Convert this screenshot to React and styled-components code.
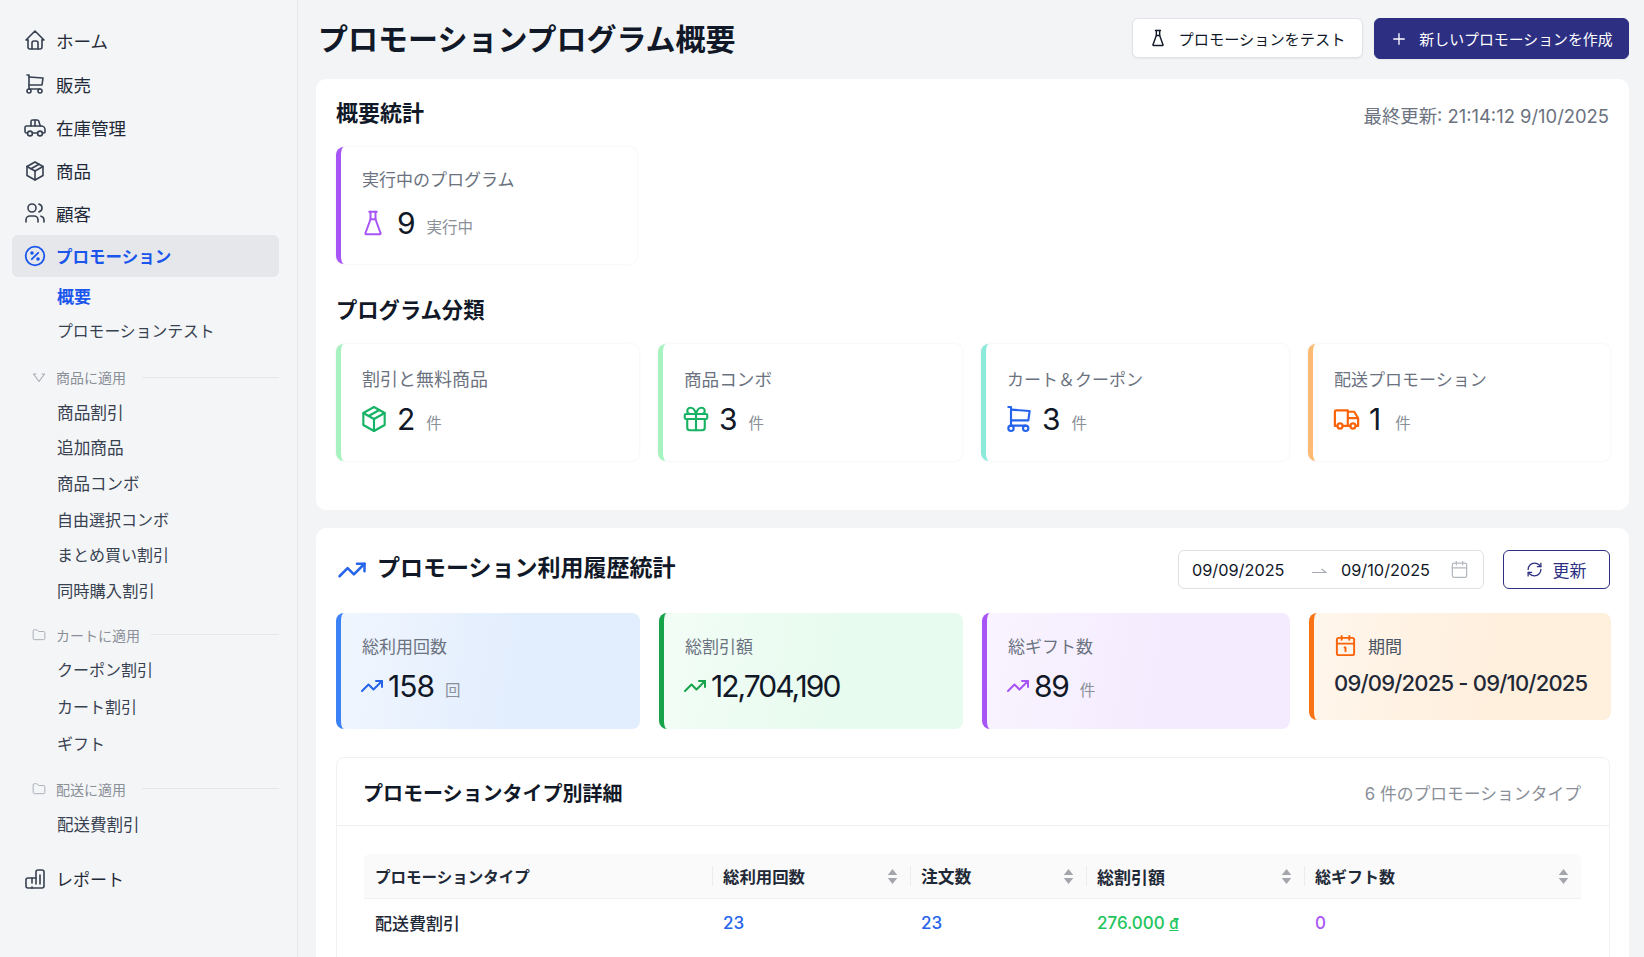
import React from "react";
import styled, { createGlobalStyle } from "styled-components";
import { Folder, Plus, TrendingUp, RefreshCw, Calendar, Calendar1 } from "lucide-react";
import { TbHome, TbShoppingCart, TbPackage, TbUsers, TbFlask, TbGift, TbTruck } from "react-icons/tb";

const Global = createGlobalStyle`
  html, body { margin: 0; padding: 0; height: 100%; overflow: hidden; background: #f3f4f6; }
  * { box-sizing: border-box; }
  body { font-family: Inter, "Noto Sans CJK JP", sans-serif; color: #111827; -webkit-font-smoothing: antialiased; }
`;

const BLUE = "#1a56eb";
const Page = styled.div`display: flex; width: 1644px; height: 957px; overflow: hidden; background: #f3f4f6;`;
const Sidebar = styled.aside`width: 298px; flex: none; padding: 19px 18px 0 12px; border-right: 1px solid #e6e8ec; background: #f4f5f7;`;
const NavItem = styled.div`
  display: flex; align-items: center; gap: 9px; height: ${p => p.$h}px; padding-left: 11px; margin-top: ${p => p.$mt || 0}px;
  font-size: ${p => p.$fs || 17.5}px; font-weight: ${p => p.$active ? 600 : 400}; color: ${p => p.$active ? BLUE : "#1f2937"};
  border-radius: 6px; background: ${p => p.$active ? "#e5e7eb" : "transparent"};
  svg { flex: none; width: 24px; height: 24px; color: ${p => p.$active ? BLUE : "#374151"}; stroke-width: 1.6; }
`;
const SubItem = styled.div`
  display: flex; align-items: center; height: ${p => p.$h}px; padding-left: 45px; margin-top: ${p => p.$mt || 0}px;
  font-size: ${p => p.$fs || 16}px; font-weight: ${p => p.$active ? 600 : 400}; color: ${p => p.$active ? BLUE : "#374151"};
`;
const GroupLabel = styled.div`
  display: flex; align-items: center; height: 26px; margin-top: ${p => p.$mt}px; padding-left: 20px;
  font-size: 14px; color: #8a8f98;
  svg { flex: none; width: 14px; height: 14px; color: #a6abb3; margin-right: 10px; stroke-width: 1.6; }
  &::after { content: ""; flex: 1; height: 1px; background: #e4e6ea; margin-left: ${p => p.$lineGap}px; }
`;

const Main = styled.main`flex: 1; min-width: 0; padding: 0 15px 0 18px; display: flex; flex-direction: column;`;
const TopBar = styled.header`display: flex; align-items: center; justify-content: space-between; height: 79px; padding-bottom: 2px; flex: none;`;
const PageTitle = styled.h1`margin: 0 0 0 2px; font-size: 30px; font-weight: 700; color: #111827; position: relative; top: -2px;`;
const Actions = styled.div`display: flex; gap: 11px;`;
const Button = styled.button`
  display: flex; align-items: center; justify-content: center; gap: ${p => p.$gap}px; height: ${p => p.$high ? 41 : 40}px; width: ${p => p.$w}px;
  border-radius: 6px; font: inherit; font-size: ${p => p.$primary ? 14.9 : 15.2}px; padding: 0 ${p => p.$primary ? 0 : 2}px 0 0;
  color: ${p => p.$primary ? "#fff" : "#111827"}; background: ${p => p.$primary ? "#2d2f82" : "#fff"};
  border: 1px solid ${p => p.$primary ? "#2d2f82" : "#e0e2e6"};
  box-shadow: 0 1px 2px rgba(0,0,0,.06);
  svg { flex: none; }
`;
const Panel = styled.section`
  background: #fff; border-radius: 10px; flex: none; height: ${p => p.$h}px; padding: ${p => p.$pt}px 19px 0 20px; margin-bottom: 18px;
`;
const PanelRow = styled.div`display: flex; align-items: center; justify-content: space-between; height: 28px;`;
const SectionTitle = styled.h2`margin: 0; font-size: 22px; font-weight: 600; color: #111827;`;
const Updated = styled.span`font-size: 18.4px; color: #6b7280; position: relative; top: 4px; margin-right: 1px;`;
const CardGrid = styled.div`display: grid; grid-template-columns: ${p => p.$cols}; column-gap: 19px; margin-top: ${p => p.$mt}px;`;
const StatCard = styled.div`
  height: 117px; padding: ${p => p.$pt}px 0 0 21px; background: #fff; border-radius: 8px; border-left: 5px solid ${p => p.$accent};
  box-shadow: 0 0 3px rgba(0,0,0,.07);
`;
const Label = styled.div`font-size: ${p => p.$fs || 17}px; line-height: 24px; color: #6b7280; white-space: nowrap;`;
const ValueRow = styled.div`display: flex; align-items: center; height: 36px; margin-top: ${p => p.$mt}px;`;
const IconBox = styled.span`display: flex; align-items: center; justify-content: center; width: ${p => p.$w}px; margin-right: ${p => p.$gap}px; color: ${p => p.$c}; svg { flex: none; }`;
const Number = styled.span`font-size: 30px; line-height: 36px; color: #111827; letter-spacing: ${p => p.$ls || 0}px;`;
const Unit = styled.span`font-size: 15.5px; color: #8a8f98; margin-left: ${p => p.$ml || 11}px; position: relative; top: 3px;`;
const SubSectionTitle = styled(SectionTitle)`margin-top: 32px; line-height: 28px; font-size: 21.3px;`;

const UsageHead = styled.div`display: flex; align-items: center; height: 39px;`;
const UsageTitle = styled.h2`margin: 0 0 0 10px; flex: 1; font-size: 23px; font-weight: 600; color: #111827; position: relative; top: -4px;`;
const TitleIcon = styled.span`display: flex; color: #2563eb; margin-left: 1px;`;
const RangePicker = styled.div`
  display: flex; align-items: center; width: 306px; height: 39px; border: 1px solid #dfe1e5; border-radius: 6px; padding-left: 13px; font-size: 16.3px; color: #111827; background: #fff;
`;
const RangeText = styled.span`flex: none; width: ${p => p.$w}px; white-space: nowrap;`;
const RangeArrow = styled.span`display: flex; flex: none; margin: 2px 14px 0 28px; color: #a6abb3;`;
const RangeIcon = styled.span`display: flex; margin-left: 19px; color: #b4b8bf;`;
const RefreshButton = styled.button`
  display: flex; align-items: center; justify-content: center; gap: 10px; width: 107px; height: 39px; margin-left: 19px; font: inherit; font-size: 17px;
  color: #2d2f82; background: #fff; border: 1px solid #2d2f82; border-radius: 6px; padding: 0 1px 1px 0;
`;
const MetricGrid = styled.div`display: grid; grid-template-columns: 304px 304px 308px 302px; column-gap: 19px; align-items: start; margin-top: 24px;`;
const Metric = styled.div`
  height: ${p => p.$h}px; padding: ${p => p.$pt}px 0 0 ${p => p.$pl}px; border-radius: 8px; border-left: 5px solid ${p => p.$accent};
  background: linear-gradient(100deg, ${p => p.$from}, ${p => p.$to} 60%);
`;
const MetricValueRow = styled(ValueRow)`margin-top: 9px;`;
const PeriodLabel = styled.div`display: flex; align-items: center; gap: 11px; height: 22px; font-size: 17px; color: #4b5563; svg { color: #f9640a; flex: none; }`;
const PeriodValue = styled.div`margin-top: 13px; font-size: 22px; line-height: 28px; letter-spacing: -0.8px; font-weight: 500; color: #1f2937; white-space: nowrap;`;

const TableCard = styled.div`margin-top: 28px; height: 300px; border: 1px solid #f0f1f3; border-radius: 8px;`;
const TableCardHead = styled.div`display: flex; align-items: center; justify-content: space-between; height: 68px; padding: 2px 28px 0 26px; border-bottom: 1px solid #eeeff2;`;
const TableTitle = styled.h3`margin: 0; font-size: 20px; font-weight: 600; color: #111827;`;
const TableCount = styled.span`font-size: 16.8px; color: #8a8f98;`;
const TableWrap = styled.div`margin: 28px 28px 0 27px;`;
const Row = styled.div`display: grid; grid-template-columns: 348px 198px 176px 218px 277px; align-items: center;`;
const HeadRow = styled(Row)`height: 45px; background: #fafafa; border-bottom: 1px solid #f0f0f0; border-radius: 6px 6px 0 0;`;
const HeadCell = styled.div`
  position: relative; display: flex; align-items: center; justify-content: space-between; height: 100%; padding: 0 12px 0 11px; font-size: ${p => p.$fs}px; font-weight: 600; color: #1f2937;
  &:not(:first-child)::before { content: ""; position: absolute; left: 0; top: 12px; height: 20px; width: 1px; background: #ececec; }
`;
const SortIcon = styled.svg`flex: none; width: 11px; height: 17px; fill: #a3a6ab;`;
const BodyRow = styled(Row)`height: 47px;`;
const Cell = styled.div`padding-left: 11px; font-size: 17px; font-weight: 500; color: ${p => p.$c || "#1f2937"};`;
const Dong = styled.span`text-decoration: underline; font-size: 15px;`;

const WarehouseIcon = () => (
  <svg viewBox="0 0 24 24" fill="none" stroke="currentColor" strokeLinecap="round" strokeLinejoin="round">
    <path d="M4.500 17H3.600A1.600 1.600 0 0 1 2 15.400v-3.800c0-.9.7-1.600 1.600-1.600H8V5.600C8 4.700 8.700 4 9.600 4h4.600c.7 0 1.300.4 1.500 1l1.600 5h1.100c1.700 0 3.600 1.600 3.600 3.600V16a1 1 0 0 1-1 1h-.8" />
    <path d="M8 10h9.300" /><path d="M12 10V4" /><path d="M9.500 17h5" /><circle cx="7" cy="17.500" r="2.400" /><circle cx="17" cy="17.500" r="2.400" />
  </svg>
);
const PercentIcon = () => (
  <svg viewBox="0 0 24 24" fill="none" stroke="currentColor" strokeLinecap="round" strokeLinejoin="round" style={{ strokeWidth: 1.8 }}>
    <circle cx="12" cy="12" r="9.300" /><path d="M8.800 15.200l6.400-6.400" />
    <circle cx="9" cy="9" r=".9" fill="currentColor" /><circle cx="15" cy="15" r=".9" fill="currentColor" />
  </svg>
);
const ReportIcon = () => (
  <svg viewBox="0 0 24 24" fill="none" stroke="currentColor" strokeLinecap="round" strokeLinejoin="round">
    <path d="M9 11H5a2 2 0 0 0-2 2v6a2 2 0 0 0 2 2h14a2 2 0 0 0 2-2V5a2 2 0 0 0-2-2h-4a2 2 0 0 0-2 2v6z" />
    <path d="M9 11v5M9 21v-1M13 11v6M17 8v9" />
  </svg>
);
const Funnel = () => (
  <svg viewBox="0 0 14 14" fill="none" stroke="currentColor" strokeLinejoin="round" strokeLinecap="round"><path d="M1.500 4h2.500M10 4h2.500M1.500 4L7 11.500 12.500 4" strokeWidth="1.100" /></svg>
);
const HalfArrow = () => (
  <svg width="16" height="8" viewBox="0 0 16 8" fill="none" stroke="currentColor" strokeWidth="1.200"><path d="M1 5.500h14L10.500 2" /></svg>
);
const Sort = () => (
  <SortIcon viewBox="0 0 10 16"><path d="M5 1l4.500 5.500h-9zM5 15L.5 9.500h9z" /></SortIcon>
);

const cats = [
  ["割引と無料商品", 18, "#a7f3c0", <TbPackage key="p" size={32} strokeWidth={1.6} color="#16b364" />, "2", 11],
  ["商品コンボ", 17.6, "#a7f3c0", <TbGift key="g" size={30} strokeWidth={1.7} color="#16b364" />, "3", 11],
  ["カート＆クーポン", 17, "#8ceadb", <TbShoppingCart key="c" size={32} strokeWidth={1.6} color="#2563eb" />, "3", 11],
  ["配送プロモーション", 17, "#fdba74", <TbTruck key="t" size={31} strokeWidth={1.7} color="#f9640a" />, "1", 14],
];
const metrics = [
  ["総利用回数", "#3b82f6", "#f0f6fe", "#e2edfd", "#2563eb", "158", "回", -1],
  ["総割引額", "#16a34a", "#f2fdf6", "#e8fbef", "#16a34a", "12,704,190", "", -2],
  ["総ギフト数", "#a855f7", "#f9f4ff", "#f4ebfe", "#a855f7", "89", "件", -1.2],
];
const heads = [["プロモーションタイプ", 15.5], ["総利用回数", 16.4], ["注文数", 16.8], ["総割引額", 17], ["総ギフト数", 16]];

export default function App() {
  return (
    <Page>
      <Global />
      <Sidebar>
        <NavItem $h={42}><TbHome />ホーム</NavItem>
        <NavItem $h={46}><TbShoppingCart />販売</NavItem>
        <NavItem $h={41}><WarehouseIcon />在庫管理</NavItem>
        <NavItem $h={45}><TbPackage />商品</NavItem>
        <NavItem $h={40}><TbUsers />顧客</NavItem>
        <NavItem $h={42} $mt={2} $active $fs={16.5}><PercentIcon />プロモーション</NavItem>
        <SubItem $h={36} $active $fs={17}>概要</SubItem>
        <SubItem $h={35} $fs={15.8}>プロモーションテスト</SubItem>
        <GroupLabel $mt={16} $lineGap={16}><Funnel />商品に適用</GroupLabel>
        <SubItem $h={35.6} $mt={4} $fs={16.7}>商品割引</SubItem>
        <SubItem $h={35.6} $fs={16.7}>追加商品</SubItem>
        <SubItem $h={35.6} $fs={16.5}>商品コンボ</SubItem>
        <SubItem $h={35.6}>自由選択コンボ</SubItem>
        <SubItem $h={35.6}>まとめ買い割引</SubItem>
        <SubItem $h={35.6} $fs={16.3}>同時購入割引</SubItem>
        <GroupLabel $mt={14} $lineGap={11}><Folder />カートに適用</GroupLabel>
        <SubItem $h={37} $mt={3}>クーポン割引</SubItem>
        <SubItem $h={37}>カート割引</SubItem>
        <SubItem $h={37}>ギフト</SubItem>
        <GroupLabel $mt={14} $lineGap={16}><Folder />配送に適用</GroupLabel>
        <SubItem $h={34} $mt={5} $fs={16.5}>配送費割引</SubItem>
        <NavItem $h={42} $mt={17} $fs={17}><ReportIcon />レポート</NavItem>
      </Sidebar>
      <Main>
        <TopBar>
          <PageTitle>プロモーションプログラム概要</PageTitle>
          <Actions>
            <Button $w={231} $gap={11}><TbFlask size={20} strokeWidth={1.7} />プロモーションをテスト</Button>
            <Button $w={255} $gap={11} $primary $high><Plus size={18} strokeWidth={1.8} />新しいプロモーションを作成</Button>
          </Actions>
        </TopBar>
        <Panel $h={431} $pt={18}>
          <PanelRow>
            <SectionTitle>概要統計</SectionTitle>
            <Updated>最終更新: 21:14:12 9/10/2025</Updated>
          </PanelRow>
          <CardGrid $cols="301px" $mt={22}>
            <StatCard $accent="#a855f7" $pt={21}>
              <Label>実行中のプログラム</Label>
              <ValueRow $mt={13}>
                <IconBox $w={22} $gap={13} $c="#a855f7"><TbFlask size={30} strokeWidth={1.6} /></IconBox>
                <Number>9</Number><Unit>実行中</Unit>
              </ValueRow>
            </StatCard>
          </CardGrid>
          <SubSectionTitle>プログラム分類</SubSectionTitle>
          <CardGrid $cols="303px 304px 308px 302px" $mt={20}>
            {cats.map(([label, fs, accent, icon, n, ml]) => (
              <StatCard $accent={accent} $pt={24} key={label}>
                <Label $fs={fs}>{label}</Label>
                <ValueRow $mt={9}>
                  <IconBox $w={24} $gap={11}>{icon}</IconBox>
                  <Number>{n}</Number><Unit $ml={ml}>件</Unit>
                </ValueRow>
              </StatCard>
            ))}
          </CardGrid>
        </Panel>
        <Panel $h={500} $pt={22}>
          <UsageHead>
            <TitleIcon><TrendingUp size={30} strokeWidth={2} /></TitleIcon>
            <UsageTitle>プロモーション利用履歴統計</UsageTitle>
            <RangePicker>
              <RangeText $w={91}>09/09/2025</RangeText>
              <RangeArrow><HalfArrow /></RangeArrow>
              <RangeText $w={90}>09/10/2025</RangeText>
              <RangeIcon><Calendar size={19} strokeWidth={1.6} /></RangeIcon>
            </RangePicker>
            <RefreshButton><RefreshCw size={17} strokeWidth={1.8} />更新</RefreshButton>
          </UsageHead>
          <MetricGrid>
            {metrics.map(([label, accent, from, to, ic, v, u, ls]) => (
              <Metric $h={116} $pt={22} $pl={21} $accent={accent} $from={from} $to={to} key={label}>
                <Label>{label}</Label>
                <MetricValueRow>
                  <IconBox $w={20} $gap={6} $c={ic}><TrendingUp size={24} strokeWidth={2} /></IconBox>
                  <Number $ls={ls}>{v}</Number>{u && <Unit>{u}</Unit>}
                </MetricValueRow>
              </Metric>
            ))}
            <Metric $h={107} $pt={21} $pl={20} $accent="#f97316" $from="#fff6ec" $to="#ffefdd">
              <PeriodLabel><Calendar1 size={23} strokeWidth={2} />期間</PeriodLabel>
              <PeriodValue>09/09/2025 - 09/10/2025</PeriodValue>
            </Metric>
          </MetricGrid>
          <TableCard>
            <TableCardHead>
              <TableTitle>プロモーションタイプ別詳細</TableTitle>
              <TableCount>6 件のプロモーションタイプ</TableCount>
            </TableCardHead>
            <TableWrap>
              <HeadRow>
                {heads.map(([h, fs], i) => (
                  <HeadCell key={h} $fs={fs}>{h}{i > 0 && <Sort />}</HeadCell>
                ))}
              </HeadRow>
              <BodyRow>
                <Cell>配送費割引</Cell>
                <Cell $c="#2563eb">23</Cell>
                <Cell $c="#2563eb">23</Cell>
                <Cell $c="#22c55e">276.000 <Dong>đ</Dong></Cell>
                <Cell $c="#a855f7">0</Cell>
              </BodyRow>
            </TableWrap>
          </TableCard>
        </Panel>
      </Main>
    </Page>
  );
}
